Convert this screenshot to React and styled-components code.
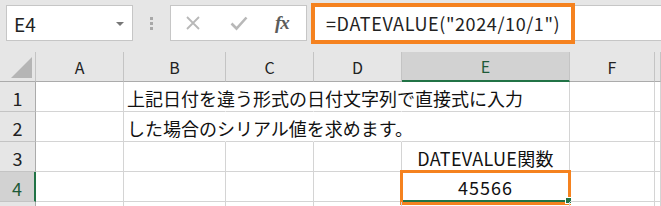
import React from "react";
import styled, { createGlobalStyle } from "styled-components";

const Global = createGlobalStyle`
  html, body { margin: 0; padding: 0; background: #e6e6e6; }
  body { width: 661px; height: 206px; overflow: hidden; font-family: "Noto Sans CJK JP", "Noto Sans", sans-serif; }
`;

const FONT = `"Noto Sans CJK JP", "Noto Sans", sans-serif`;
const ORANGE = "#f5821f";
const GREEN = "#217346";

const Page = styled.div`
  width: 661px;
  height: 206px;
  overflow: hidden;
  background: #e6e6e6;
`;

const TopBar = styled.div`
  display: flex;
  align-items: flex-start;
  height: 52px;
  padding: 5px 0 0 6px;
  box-sizing: border-box;
`;

const NameBox = styled.div`
  position: relative;
  width: 127px;
  height: 36px;
  box-sizing: border-box;
  background: #fff;
  border: 1px solid #c6c6c6;
  display: flex;
  align-items: center;
  padding-left: 7px;
  font-family: ${FONT};
  font-size: 19px;
  color: #222;
`;

const Caret = styled.span`
  position: absolute;
  right: 8px;
  top: 16px;
  width: 0;
  height: 0;
  border-left: 4px solid transparent;
  border-right: 4px solid transparent;
  border-top: 4px solid #777;
`;

const DotsWrap = styled.div`
  width: 37px;
  height: 36px;
  display: flex;
  flex-direction: column;
  align-items: center;
  justify-content: center;
  gap: 2px;
`;

const Dot = styled.span`
  width: 3px;
  height: 3px;
  background: #a8a8a8;
`;

const IconBox = styled.div`
  width: 137px;
  height: 36px;
  box-sizing: border-box;
  background: #fff;
  border: 1px solid #c6c6c6;
  display: flex;
  align-items: center;
  padding-left: 14px;
  gap: 29px;
`;

const Fx = styled.span`
  font-family: "Liberation Serif", serif;
  font-style: italic;
  font-weight: bold;
  font-size: 19px;
  color: #5c5c5c;
  margin-left: -2px;
  letter-spacing: -1px;
`;

const FormulaBox = styled.div`
  position: relative;
  flex: 1;
  margin-left: 4px;
  height: 36px;
  box-sizing: border-box;
  background: #fff;
  border: 1px solid #c6c6c6;
  border-right: none;
  display: flex;
  align-items: center;
  padding-left: 14px;
  font-family: ${FONT};
  font-size: 18px;
  letter-spacing: 0.6px;
  color: #222;
`;

const Highlight = styled.div`
  position: absolute;
  left: -1px;
  top: -3px;
  width: 264px;
  height: 41px;
  box-sizing: border-box;
  border: 4px solid ${ORANGE};
  pointer-events: none;
`;

const Sheet = styled.div`
  display: grid;
  grid-template-columns: 36px 88px 102px 88px 88px 168px 85px 1fr;
  grid-auto-rows: 30px;
  background: #fff;
`;

const ColHead = styled.div`
  box-sizing: border-box;
  background: ${(p) => (p.$active ? "#d2d2d2" : "#e6e6e6")};
  border-right: 1px solid #c4c4c4;
  border-bottom: ${(p) => (p.$active ? `2px solid ${GREEN}` : "1px solid #ababab")};
  display: flex;
  align-items: center;
  justify-content: center;
  font-family: ${FONT};
  font-size: 16px;
  color: ${(p) => (p.$active ? "#1e5a38" : "#222")};
`;

const Corner = styled.div`
  position: relative;
  box-sizing: border-box;
  background: #e6e6e6;
  border-right: 1px solid #c4c4c4;
  border-bottom: 1px solid #ababab;
  &::after {
    content: "";
    position: absolute;
    right: 3px;
    bottom: 3px;
    width: 0;
    height: 0;
    border-left: 21px solid transparent;
    border-bottom: 21px solid #b5b5b5;
  }
`;

const RowHead = styled.div`
  box-sizing: border-box;
  background: ${(p) => (p.$active ? "#d2d2d2" : "#e6e6e6")};
  border-right: ${(p) => (p.$active ? `2px solid ${GREEN}` : "1px solid #ababab")};
  border-bottom: 1px solid #c4c4c4;
  display: flex;
  align-items: center;
  justify-content: center;
  padding-top: 2px;
  font-family: ${FONT};
  font-size: 18px;
  color: ${(p) => (p.$active ? "#1e5a38" : "#222")};
`;

const Cell = styled.div`
  position: relative;
  box-sizing: border-box;
  min-width: 0;
  border-right: 1px solid ${(p) => (p.$noRight ? "transparent" : "#d4d4d4")};
  border-bottom: ${(p) => (p.$selected ? `2px solid ${GREEN}` : "1px solid #d4d4d4")};
  display: flex;
  align-items: center;
  justify-content: ${(p) => (p.$center ? "center" : "flex-start")};
  padding: 2px 0 0 ${(p) => (p.$center ? "0" : "3px")};
  font-family: ${FONT};
  font-size: 18px;
  letter-spacing: ${(p) => p.$ls || "0"};
  color: #111;
  white-space: nowrap;
  overflow: visible;
  z-index: ${(p) => (p.$over ? 1 : 0)};
`;

const FillHandle = styled.span`
  position: absolute;
  right: -3px;
  bottom: -4px;
  width: 5px;
  height: 5px;
  background: ${GREEN};
  border: 1px solid #fff;
  z-index: 3;
`;

const CellMark = styled.div`
  position: absolute;
  left: -2px;
  top: -2px;
  right: -2px;
  bottom: -5px;
  border: 3px solid ${ORANGE};
  pointer-events: none;
  z-index: 2;
`;

const XIcon = () => (
  <svg width="16" height="16" viewBox="0 0 16 16">
    <path d="M2 2 L14 14 M14 2 L2 14" stroke="#b8b8b8" strokeWidth="1.8" fill="none" />
  </svg>
);

const CheckIcon = () => (
  <svg width="18" height="16" viewBox="0 0 18 16">
    <path d="M1.5 8.5 L6.5 13.5 L16.5 2.5" stroke="#b8b8b8" strokeWidth="2.6" fill="none" />
  </svg>
);

const cols = ["A", "B", "C", "D", "E", "F", ""];

const rows = [
  { n: "1", b: "上記日付を違う形式の日付文字列で直接式に入力", overflow: true },
  { n: "2", b: "した場合のシリアル値を求めます。", overflow: true },
  { n: "3", e: "DATEVALUE関数", ls: "0.3px" },
  { n: "4", e: "45566", active: true, ls: "1px" },
  { n: "" },
];

export default function App() {
  return (
    <Page>
      <Global />
      <TopBar>
        <NameBox>
          E4
          <Caret />
        </NameBox>
        <DotsWrap>
          <Dot />
          <Dot />
          <Dot />
        </DotsWrap>
        <IconBox>
          <XIcon />
          <CheckIcon />
          <Fx>fx</Fx>
        </IconBox>
        <FormulaBox>
          =DATEVALUE("2024/10/1")
          <Highlight />
        </FormulaBox>
      </TopBar>
      <Sheet>
        <Corner />
        {cols.map((c, i) => (
          <ColHead key={i} $active={c === "E"}>
            {c}
          </ColHead>
        ))}
        {rows.map((r, idx) => (
          <React.Fragment key={idx}>
            <RowHead $active={r.active}>{r.n}</RowHead>
            <Cell />
            <Cell $noRight={r.overflow} $over>
              {r.b}
            </Cell>
            <Cell $noRight={r.overflow} />
            <Cell $noRight={r.overflow} />
            <Cell $center $selected={r.active} $ls={r.ls}>
              {r.e}
              {r.active && <CellMark />}
              {r.active && <FillHandle />}
            </Cell>
            <Cell />
            <Cell />
          </React.Fragment>
        ))}
      </Sheet>
    </Page>
  );
}
